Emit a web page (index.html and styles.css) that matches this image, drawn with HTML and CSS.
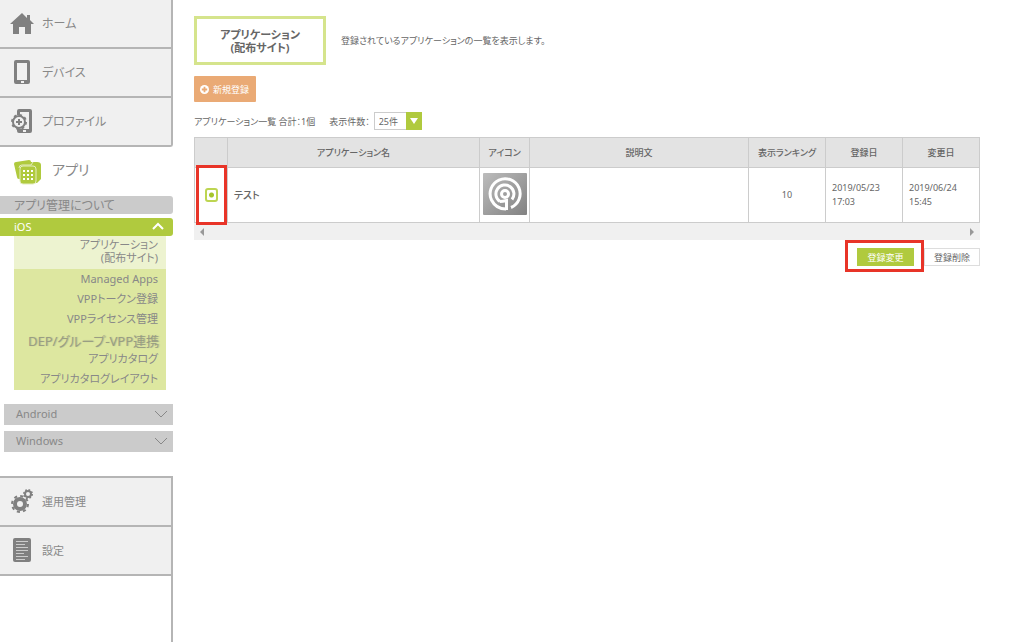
FILE: index.html
```html
<!DOCTYPE html>
<html lang="ja">
  <head>
    <meta charset="UTF-8">
    <title>アプリケーション (配布サイト)</title>
    <link rel="stylesheet" href="styles.css">
  </head>

  <body>

    <nav class="sidebar">
      <a class="menu" href="#">
        <svg class="menu_icono" viewBox="0 0 24 26"><path d="M12 3L0 14h3v10h6v-7h6v7h6V14h3L20 10V5h-3v3z"/></svg>
        ホーム
      </a>
      <a class="menu" href="#">
        <svg class="menu_icono" viewBox="0 0 24 26"><path fill-rule="evenodd" d="M6 1h12q2 0 2 2v20q0 2-2 2H6q-2 0-2-2V3q0-2 2-2zM7 4v17h10V4zM11 22v2h3v-2z"/></svg>
        デバイス
      </a>
      <a class="menu menu_fin" href="#">
        <svg class="menu_icono" viewBox="0 0 24 26">
          <path d="M7 7V3q0-2 2-2h11q2 0 2 2v20q0 2-2 2H9q-2 0-2-2v-2h12V4H10v3z"/>
          <circle cx="9" cy="14" r="6" fill="#f0f0f0" stroke="#808080" stroke-width="2"/>
          <circle cx="9" cy="14" r="7" fill="none" stroke="#808080" stroke-width="2" stroke-dasharray="2.75 2.75"/>
          <path d="M8 11h2v2h2v2h-2v2H8v-2H6v-2h2z"/>
          <path fill="#f0f0f0" d="M13 22h3v2h-3z"/>
        </svg>
        プロファイル
      </a>

      <div class="apli">
        <a class="apli_titulo" href="#">
          <svg class="apli_icono" viewBox="0 0 28 26">
            <path fill="#b0ca3e" d="M0 5Q0 3 2 3L15 1q2 0 2 2h6q4 0 4 3v14l-4 4L5 20q-2 0-2-2z"/>
            <path fill="none" stroke="#e4edc0" d="M5 9q0-3 3-3h9l2-3"/>
            <rect x="6" y="7" width="16" height="18" rx="3" fill="#b0ca3e" stroke="#e4edc0"/>
            <path fill="#fff" d="M9 11h2v2H9zm4 0h2v2h-2zm4 0h2v2h-2zM9 15h2v2H9zm4 0h2v2h-2zm4 0h2v2h-2zM9 19h2v2H9zm4 0h2v2h-2zm4 0h2v2h-2z"/>
          </svg>
          アプリ
        </a>
        <a class="barra" href="#">アプリ管理について</a>
        <button class="barra barra_ios" type="button">iOS
          <svg class="flecha" viewBox="0 0 12 12"><path d="M1 9l5-5 5 5"/></svg>
        </button>
        <div class="submenu">
          <a class="activo" href="#">アプリケーション<br>(配布サイト)</a>
          <a href="#">Managed Apps</a>
          <a href="#">VPPトークン登録</a>
          <a href="#">VPPライセンス管理</a>
          <a class="dep" href="#">DEP/グループ-VPP連携</a>
          <a href="#">アプリカタログ</a>
          <a href="#">アプリカタログレイアウト</a>
        </div>
        <button class="plegado" type="button">Android
          <svg class="flecha" viewBox="0 0 12 12"><path d="M0 3l6 6 6-6"/></svg>
        </button>
        <button class="plegado" type="button">Windows
          <svg class="flecha" viewBox="0 0 12 12"><path d="M0 3l6 6 6-6"/></svg>
        </button>
      </div>

      <a class="menu menu_inicio menu_corto" href="#">
        <svg class="menu_icono" viewBox="0 0 24 26">
          <circle cx="10" cy="16" r="5" fill="none" stroke="#808080" stroke-width="4"/>
          <circle cx="10" cy="16" r="8" fill="none" stroke="#808080" stroke-width="2" stroke-dasharray="3.14 3.14"/>
          <circle cx="18" cy="6" r="3" fill="none" stroke="#808080" stroke-width="2"/>
          <circle cx="18" cy="6" r="4" fill="none" stroke="#808080" stroke-width="2" stroke-dasharray="1.57 1.57"/>
        </svg>
        運用管理
      </a>
      <a class="menu menu_corto" href="#">
        <svg class="menu_icono" viewBox="0 0 24 26">
          <rect x="3" y="1" width="18" height="24" rx="2"/>
          <path stroke="#ccc" d="M6 4.5h12M6 7.5h9M6 10.5h12M6 13.5h12M6 16.5h8M6 19.5h12M6 22.5h9"/>
        </svg>
        設定
      </a>
      <div class="relleno"></div>
    </nav>

    <main class="contenido">
      <div class="cabecera">
        <h1>アプリケーション<br>(配布サイト)</h1>
        <p>登録されているアプリケーションの一覧を表示します。</p>
      </div>

      <button class="nuevo" type="button">
        <svg viewBox="0 0 10 10"><circle cx="5" cy="5" r="5" fill="#fff"/><path d="M4 2h2v2h2v2H6v2H4V6H2V4h2z" fill="#eaaa75"/></svg>
        新規登録
      </button>

      <div class="filtro">
        <span>アプリケーション一覧 合計：1個</span>
        <label for="numero">表示件数：</label>
        <span class="selector">
          <select id="numero" name="numero">
            <option>25件</option>
            <option>50件</option>
            <option>100件</option>
          </select>
        </span>
      </div>

      <table class="lista">
        <thead>
          <tr>
            <th class="c_radio"></th>
            <th class="c_nombre">アプリケーション名</th>
            <th class="c_icono">アイコン</th>
            <th class="c_texto">説明文</th>
            <th class="c_rango">表示ランキング</th>
            <th class="c_fecha">登録日</th>
            <th class="c_fecha">変更日</th>
          </tr>
        </thead>
        <tbody>
          <tr>
            <td class="centro marcado"><input type="radio" id="app1" name="app" checked></td>
            <td class="nombre"><label for="app1">テスト</label></td>
            <td class="centro">
              <svg class="logo" viewBox="0 0 44 42">
                <defs>
                  <linearGradient id="gris" x1="0" y1="0" x2="1" y2="1">
                    <stop offset="0" stop-color="#bcbcbc"/>
                    <stop offset="1" stop-color="#828282"/>
                  </linearGradient>
                </defs>
                <rect width="44" height="42" rx="1" fill="url(#gris)"/>
                <g fill="none" stroke="#fff" stroke-width="3">
                  <circle cx="22" cy="21" r="3.5"/>
                  <path d="M17 28.5A9 9 0 1 1 29 26.500"/>
                  <path d="M23.500 37v-9.500q-4 1-6.500 1"/>
                  <path d="M23 36Q13 36 8.500 27A15 15 0 1 1 28 34.500"/>
                </g>
              </svg>
            </td>
            <td></td>
            <td class="centro">10</td>
            <td>2019/05/23<br>17:03</td>
            <td>2019/06/24<br>15:45</td>
          </tr>
        </tbody>
      </table>
      <div class="desplazar">
        <svg viewBox="0 0 4 8"><path d="M4 0v8L0 4z"/></svg>
        <svg viewBox="0 0 4 8"><path d="M0 0v8l4-4z"/></svg>
      </div>

      <div class="botones">
        <span class="marcado"><button class="cambiar" type="button">登録変更</button></span>
        <button class="borrar" type="button">登録削除</button>
      </div>
    </main>

  </body>
</html>
```
FILE: styles.css
```css
* {
  box-sizing: border-box;
}

body {
  margin: 0;
  min-height: 100vh;
  display: flex;
  background: #fff;
  color: #666;
  font-family: "Noto Sans", "Noto Sans CJK JP", sans-serif;
  font-size: 9px;
  font-feature-settings: "palt";
}

a {
  color: inherit;
  text-decoration: none;
}

button, select {
  font: inherit;
  font-feature-settings: inherit;
  color: inherit;
}

/* menu lateral */
.sidebar {
  flex: 0 0 173px;
  display: flex;
  flex-direction: column;
  color: #888;
  font-size: 12px;
}

.menu {
  height: 49px;
  padding: 0 0 2px 10px;
  display: flex;
  align-items: center;
  gap: 8px;
  background: #f0f0f0;
  border-right: 2px solid #b5b5b5;
  border-bottom: 2px solid #b5b5b5;
}

.menu_inicio {
  height: 51px;
  border-top: 2px solid #b5b5b5;
}

.menu_fin {
  border-bottom-right-radius: 3px;
}

.menu_corto {
  font-size: 11px;
}

.menu_icono {
  width: 24px;
  height: 26px;
  fill: #808080;
}

.relleno {
  flex: 1;
  border-right: 2px solid #b5b5b5;
}

.apli {
  display: flex;
  flex-direction: column;
  padding-bottom: 24px;
}

.apli_titulo {
  height: 49px;
  padding: 0 0 6px 14px;
  display: flex;
  align-items: center;
  gap: 10px;
  font-size: 14px;
}

.apli_icono {
  width: 28px;
  height: 26px;
  margin-top: 6px;
}

.barra {
  height: 18px;
  padding: 0 9px 0 14px;
  display: flex;
  align-items: center;
  justify-content: space-between;
  background: #cbcbcb;
  border: none;
  border-radius: 0 3px 3px 0;
}

.barra_ios {
  margin-top: 4px;
  padding-bottom: 2px;
  background: #b0ca3e;
  color: #fff;
  font-size: 11px;
}

.flecha {
  width: 12px;
  height: 12px;
  fill: none;
  stroke: #888;
}

.barra_ios .flecha {
  stroke: #fff;
  stroke-width: 2;
}

.submenu {
  margin: 0 7px 14px 14px;
  padding-bottom: 1px;
  background: #dde7a0;
  font-size: 11px;
  line-height: 20px;
  text-align: right;
}

.submenu a {
  display: block;
  height: 20px;
  padding-right: 8px;
}

.submenu .activo {
  height: 33px;
  padding-top: 2px;
  line-height: 13px;
  background: #edf3d0;
}

.submenu .dep {
  margin: 0 2px 0 14px;
  padding: 0;
  overflow: hidden;
  white-space: nowrap;
  color: #999e83;
  font-size: 13px;
  line-height: 24px;
  text-align: left;
  text-shadow: 1px 0 1px #b5bc90;
}

.plegado {
  height: 21px;
  margin: 0 0 6px 4px;
  padding: 0 6px 2px 12px;
  display: flex;
  align-items: center;
  justify-content: space-between;
  background: #cbcbcb;
  border: none;
  font-size: 11px;
}

.plegado:last-child {
  margin-bottom: 0;
}

/* contenido */
.contenido {
  flex: 1;
  padding: 16px 44px 0 21px;
}

.cabecera {
  display: flex;
  align-items: center;
  gap: 15px;
}

.cabecera h1 {
  width: 132px;
  margin: 0;
  padding: 9px 0 8px;
  border: 3px solid #d5e48c;
  font-size: 11px;
  line-height: 13px;
  text-align: center;
}

.cabecera p {
  margin: 0;
  font-size: 9px;
}

.nuevo {
  height: 26px;
  margin-top: 11px;
  padding: 0 7px 0 6px;
  display: flex;
  align-items: center;
  gap: 4px;
  background: #eaaa75;
  border: none;
  border-radius: 1px;
  color: #fff;
}

.nuevo svg {
  width: 9px;
  height: 9px;
}

.filtro {
  margin: 10px 0 7px;
  display: flex;
  align-items: center;
}

.filtro label {
  margin: 0 4px 0 14px;
}

.selector {
  position: relative;
  display: flex;
}

.selector select {
  width: 48px;
  height: 18px;
  padding: 0 18px 0 4px;
  appearance: none;
  background: #fff;
  border: 1px solid #ccc;
  border-radius: 0;
}

.selector::after {
  content: "";
  position: absolute;
  top: 0;
  right: 0;
  width: 16px;
  height: 18px;
  background: #b0ca3e;
  pointer-events: none;
}

.selector::before {
  content: "";
  position: absolute;
  z-index: 1;
  top: 6px;
  right: 4px;
  border: 4px solid transparent;
  border-top: 6px solid #fff;
  border-bottom: none;
  pointer-events: none;
}

.lista {
  width: 100%;
  table-layout: fixed;
  border-collapse: collapse;
}

.lista th, .lista td {
  padding: 0 6px;
  border: 1px solid #ccc;
}

.lista th {
  height: 30px;
  padding: 0;
  background: #e3e3e3;
  font-weight: 500;
}

.lista td {
  height: 55px;
  line-height: 14px;
}

.lista .centro {
  padding: 0;
  text-align: center;
}

.lista .nombre {
  font-size: 10px;
  font-weight: 500;
}

.c_radio { width: 33px; }
.c_icono { width: 50px; }
.c_nombre { width: 252px; }
.c_rango { width: 77px; }
.c_fecha { width: 77px; }

.lista input {
  width: 13px;
  height: 14px;
  margin: 0;
  display: inline-block;
  vertical-align: middle;
  appearance: none;
  border: 2px solid #bdd551;
  border-radius: 3px;
}

.lista input:checked {
  background: radial-gradient(circle, #a5c52c 2px, #fff 3px);
}

.logo {
  width: 44px;
  height: 42px;
  display: block;
  margin: 0 auto 2px;
}

.desplazar {
  height: 17px;
  padding: 0 6px;
  display: flex;
  align-items: center;
  justify-content: space-between;
  background: #f0f0f0;
}

.desplazar svg {
  width: 4px;
  height: 8px;
  fill: #999;
}

.botones {
  margin-top: 8px;
  display: flex;
  justify-content: flex-end;
  gap: 10px;
}

.botones button {
  height: 18px;
  padding: 0;
  display: block;
  border: none;
}

.botones .cambiar {
  width: 57px;
  background: #b0ca3e;
  color: #fff;
}

.botones .borrar {
  width: 56px;
  background: #fff;
  border: 1px solid #ddd;
}

/* recuadros rojos */
.marcado {
  position: relative;
}

.marcado::after {
  content: "";
  position: absolute;
  z-index: 2;
  inset: -3px 0 -3px 1px;
  border: 3px solid #e83428;
  pointer-events: none;
}

.botones .marcado::after {
  inset: -8px -10px -6px -12px;
}
```
